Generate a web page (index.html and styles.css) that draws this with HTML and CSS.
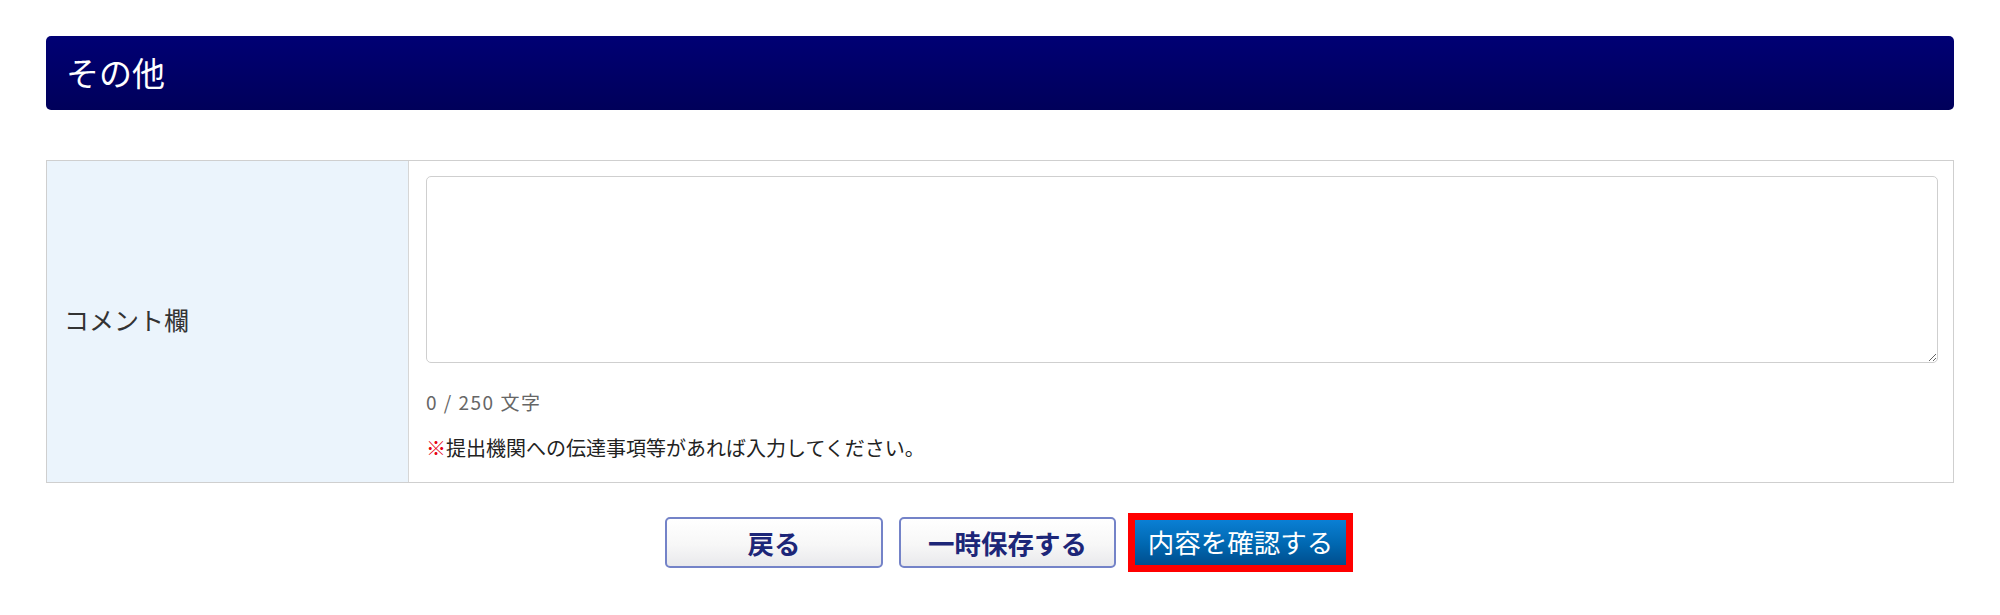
FILE: index.html
```html
<!DOCTYPE html>
<html lang="ja">
<head>
<meta charset="utf-8">
<title>その他</title>
<link rel="stylesheet" href="styles.css">
</head>
<body>
<div class="page">
  <h2 class="section-title">その他</h2>
  <div class="form-table">
    <div class="label-cell">コメント欄</div>
    <div class="field-cell">
      <textarea class="comment" maxlength="250"></textarea>
      <div class="counter">0 / 250 文字</div>
      <div class="note"><span class="mark">※</span>提出機関への伝達事項等があれば入力してください。</div>
    </div>
  </div>
  <div class="actions">
    <button class="btn btn-sub" type="button">戻る</button>
    <button class="btn btn-sub" type="button">一時保存する</button>
    <button class="btn btn-main" type="button">内容を確認する</button>
  </div>
</div>
</body>
</html>
```

FILE: styles.css
```css
html, body {
  margin: 0;
  padding: 0;
  background: #fff;
}
body {
  font-family: "Noto Sans CJK JP", "Noto Sans", sans-serif;
  color: #333;
}
.page {
  padding: 36px 46px;
}
.section-title {
  margin: 0;
  height: 74px;
  box-sizing: border-box;
  display: flex;
  align-items: center;
  padding: 0 0 3px 20px;
  border-radius: 5px;
  background: linear-gradient(to bottom, #000074, #00005a);
  color: #fff;
  font-size: 33px;
  font-weight: normal;
}
.form-table {
  margin-top: 50px;
  border: 1px solid #cfcfcf;
  display: grid;
  grid-template-columns: 362px 1fr;
}
.label-cell {
  background: #ebf4fc;
  border-right: 1px solid #d6d6d6;
  display: flex;
  align-items: center;
  padding: 0 0 5px 17px;
  font-size: 25px;
  color: #333;
}
.field-cell {
  padding: 15px 15px 21px 17px;
}
.comment {
  display: block;
  width: 100%;
  height: 187px;
  box-sizing: border-box;
  border: 1px solid #cfcfcf;
  border-radius: 5px;
  margin: 0;
  font-family: inherit;
}
.counter {
  margin-top: 26px;
  line-height: 26px;
  font-size: 19px;
  letter-spacing: 1.5px;
  color: #666;
}
.note {
  margin-top: 20px;
  line-height: 26px;
  font-size: 20px;
  color: #222;
}
.mark {
  color: #e60012;
}
.actions {
  margin-top: 34px;
  display: flex;
  justify-content: center;
  align-items: center;
  padding-left: 11px;
}
.btn {
  font-family: inherit;
  cursor: pointer;
  margin: 0;
  box-sizing: border-box;
}
.btn-sub {
  width: 218px;
  height: 51px;
  margin-right: 16px;
  border: 2px solid #7483c8;
  border-radius: 5px;
  background: linear-gradient(to bottom, #ffffff 0%, #f7f7f7 55%, #e9e9ec 100%);
  color: #1d2678;
  font-size: 26.5px;
  font-weight: bold;
  padding: 0;
}
.btn-sub + .btn-sub {
  width: 217px;
  margin-right: 19px;
}
.btn-main {
  width: 211px;
  height: 45px;
  border: none;
  border-radius: 0;
  background: linear-gradient(to bottom, #0a7fd4 0%, #0067b0 55%, #004e8e 100%);
  color: #fff;
  font-size: 26.5px;
  font-weight: normal;
  padding: 0 0 2px;
  outline: 7px solid #ff0000;
}
```
